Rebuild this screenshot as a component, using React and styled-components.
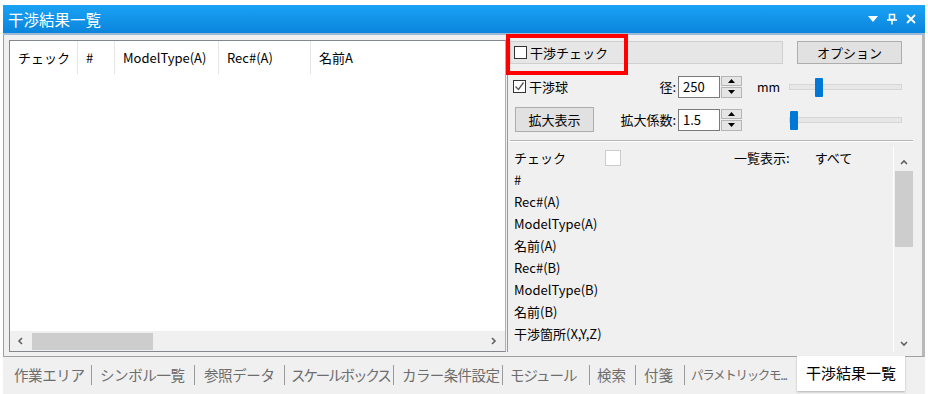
import React from 'react'
import styled, { createGlobalStyle } from 'styled-components'

const Global = createGlobalStyle`
  body {
    margin: 0;
    background: #ffffff;
    font-family: "Noto Sans CJK JP", "Noto Sans", sans-serif;
    font-size: 13px;
    color: #000;
  }
`

const Window = styled.div`
  margin: 5px 3px 0 3px;
  width: 922px;
  height: 389px;
  display: flex;
  flex-direction: column;
  background: #f0f0f0;
  box-sizing: border-box;
`

const TitleBar = styled.div`
  height: 28px;
  flex: none;
  display: flex;
  align-items: center;
  padding: 0 8px 0 5px;
  background: linear-gradient(#1aa3f5, #0a84dc);
  color: #fff;
  font-size: 15.5px;
  border-bottom: 2px solid #9db9d6;
`

const TitleText = styled.div`
  flex: 1;
`

const TitleIcons = styled.div`
  display: flex;
  align-items: center;
  gap: 7px;
`

const Body = styled.div`
  flex: 1;
  display: flex;
  padding: 5px 4px 4px 5px;
  border-left: 1px solid #a0a0a0;
  border-right: 3px solid #b8b8b8;
  border-bottom: 1px solid #a0a0a0;
  min-height: 0;
`

const ListView = styled.div`
  width: 497px;
  flex: none;
  display: flex;
  flex-direction: column;
  background: #fff;
  border: 1px solid #828790;
  border-right-color: #b0b0b0;
  box-sizing: border-box;
`

const HeaderRow = styled.div`
  height: 33px;
  display: flex;
  align-items: center;
`

const HeaderCell = styled.div`
  width: ${p => p.w}px;
  box-sizing: border-box;
  padding-left: 8px;
  height: 33px;
  line-height: 33px;
  border-right: ${p => (p.last ? 'none' : '1px solid #e5e5e5')};
  white-space: nowrap;
`

const ListBody = styled.div`
  flex: 1;
`

const HScroll = styled.div`
  height: 20px;
  display: flex;
  align-items: center;
  background: #f0f0f0;
  padding: 0 6px;
  gap: 6px;
`

const HThumb = styled.div`
  width: 121px;
  height: 17px;
  background: #cdcdcd;
`

const Spacer = styled.div`
  flex: 1;
`

const RightPanel = styled.div`
  flex: 1;
  position: relative;
  display: flex;
  flex-direction: column;
  padding-left: 2px;
  border-left: 1px solid #9a9a9a;
  margin-left: 1px;
`

const TopRow = styled.div`
  display: flex;
  align-items: center;
  height: 23px;
  margin-top: 1px;
  gap: 14px;
`

const GroupBar = styled.div`
  flex: none;
  width: 273px;
  height: 23px;
  box-sizing: border-box;
  background: #e6e6e6;
  border: 1px solid #cfcfcf;
  display: flex;
  align-items: center;
  padding-left: 3px;
  gap: 3px;
`

const Button = styled.div`
  width: ${p => p.w}px;
  height: ${p => p.h || 23}px;
  box-sizing: border-box;
  background: #e1e1e1;
  border: 1px solid #adadad;
  display: flex;
  align-items: center;
  justify-content: center;
  flex: none;
`

const Box = styled.span`
  display: inline-flex;
  align-items: center;
  justify-content: center;
  width: 13px;
  height: 13px;
  box-sizing: border-box;
  background: #fff;
  border: 1px solid #333;
  flex: none;
`

const Highlight = styled.div`
  position: absolute;
  left: -2px;
  top: -6px;
  width: 122px;
  height: 41px;
  box-sizing: border-box;
  border: 4px solid #ff0000;
  pointer-events: none;
`

const OptRow = styled.div`
  display: grid;
  grid-template-columns: 98px 70px 64px 47px 113px;
  align-items: center;
  height: ${p => p.h}px;
  margin-top: ${p => p.mt}px;
`

const CheckLabel = styled.div`
  display: flex;
  align-items: center;
  gap: 3px;
  padding-left: 3px;
`

const FieldLabel = styled.div`
  text-align: right;
  padding-right: 2px;
`

const Field = styled.div`
  display: flex;
  height: 22px;
`

const Input = styled.div`
  width: 42px;
  box-sizing: border-box;
  background: #fff;
  border: 1px solid #7a7a7a;
  padding-left: 4px;
  line-height: 20px;
`

const Spin = styled.div`
  width: 22px;
  display: flex;
  flex-direction: column;
  gap: 1px;
  padding-left: 1px;
  box-sizing: border-box;
`

const SpinBtn = styled.div`
  flex: 1;
  background: #e5e5e5;
  border: 1px solid #b5b5b5;
  display: flex;
  align-items: center;
  justify-content: center;
`

const Unit = styled.div`
  padding-left: 15px;
  font-size: 12.5px;
`

const Slider = styled.div`
  position: relative;
  height: 20px;
  display: flex;
  align-items: center;
`

const Track = styled.div`
  width: 100%;
  height: 4px;
  background: #e7e7e7;
  border: 1px solid #d6d6d6;
`

const Thumb = styled.div`
  position: absolute;
  top: 1px;
  width: 8px;
  height: 19px;
  background: #0078d7;
  border-radius: 1px;
`

const Separator = styled.div`
  height: 0;
  border-top: 1px solid #b5b5b5;
  border-bottom: 1px solid #fff;
  margin: 8px 5px 5px 0;
`

const ListArea = styled.div`
  flex: 1;
  display: flex;
  min-height: 0;
  overflow: hidden;
`

const Props = styled.div`
  flex: 1;
  padding-left: 4px;
  overflow: hidden;
`

const PropRow = styled.div`
  height: 22px;
  line-height: 22px;
  display: flex;
  align-items: center;
  white-space: nowrap;
`

const PropName = styled.div`
  width: 91px;
`

const GhostBox = styled.div`
  width: 16px;
  height: 16px;
  box-sizing: border-box;
  background: #fff;
  border: 1px solid #cccccc;
`

const ViewAll = styled.div`
  margin-left: 113px;
  display: flex;
  gap: 25px;
`

const VScroll = styled.div`
  width: 19px;
  flex: none;
  display: flex;
  flex-direction: column;
  align-items: center;
  background: #f0f0f0;
  border-left: 1px solid #fff;
  margin-right: 5px;
  padding: 11px 0 4px;
  gap: 3px;
`

const VThumb = styled.div`
  width: 18px;
  height: 76px;
  background: #cdcdcd;
`

const TabStrip = styled.div`
  height: 37px;
  flex: none;
  display: flex;
  align-items: flex-start;
  padding-left: 4px;
  background: #f0f0f0;
`

const Tab = styled.div`
  width: ${p => p.w}px;
  flex: none;
  box-sizing: border-box;
  padding-left: ${p => p.pl}px;
  color: #6d6d6d;
  font-size: ${p => p.fs || 14.5}px;
  letter-spacing: ${p => p.ls || 0}px;
  white-space: nowrap;
  overflow: hidden;
  border-right: ${p => (p.sep ? '1px solid #9a9a9a' : 'none')};
  height: 20px;
  line-height: 20px;
  margin-top: 8px;
`

const ActiveTab = styled.div`
  width: 108px;
  flex: none;
  height: 35px;
  line-height: 33px;
  margin-top: -1px;
  text-align: center;
  background: #fff;
  color: #000;
  font-size: 15px;
  white-space: nowrap;
  box-shadow: 0 1px 2px #b0b0b0;
`

const Chevron = ({ dir }) => {
  const pts = {
    left: '6,2 3,5 6,8',
    right: '3,2 6,5 3,8',
    up: '2,6 5,3 8,6',
    down: '2,4 5,7 8,4',
  }[dir]
  return (
    <svg width="10" height="10" viewBox="0 0 10 10">
      <polyline points={pts} fill="none" stroke="#606060" strokeWidth="1.6" />
    </svg>
  )
}

const Tri = ({ up }) => (
  <svg width="7" height="4" viewBox="0 0 7 4">
    <polygon points={up ? '0,4 7,4 3.5,0' : '0,0 7,0 3.5,4'} fill="#000" />
  </svg>
)

const Check = () => (
  <svg width="11" height="11" viewBox="0 0 11 11">
    <polyline points="1.5,5.5 4.5,8.5 9.5,1.5" fill="none" stroke="#555" strokeWidth="1.3" />
  </svg>
)

const columns = [
  ['チェック', 68],
  ['#', 37],
  ['ModelType(A)', 104],
  ['Rec#(A)', 92],
  ['名前A', 110],
]

const props = [
  'Rec#(A)',
  'ModelType(A)',
  '名前(A)',
  'Rec#(B)',
  'ModelType(B)',
  '名前(B)',
  '干渉箇所(X,Y,Z)',
]

// label, width, padding-left, letter-spacing, separator, font-size
const tabs = [
  ['作業エリア', 85, 7, -0.4, true],
  ['シンボル一覧', 103, 8, -0.4, true],
  ['参照データ', 90, 9, -0.4, true],
  ['スケールボックス', 109, 6, -2.1, true],
  ['カラー条件設定', 109, 8, -0.6, true],
  ['モジュール', 87, 7, -1, true],
  ['検索', 46, 7, 0, true],
  ['付箋', 49, 8, 0, true],
  ['パラメトリックモ...', 112, 6, -1.3, false, 12.5],
]

const App = () => (
  <>
    <Global />
    <Window>
      <TitleBar>
        <TitleText>干渉結果一覧</TitleText>
        <TitleIcons>
          <svg width="12" height="12" viewBox="0 0 12 12">
            <polygon points="1,3 11,3 6,9" fill="#fff" />
          </svg>
          <svg width="12" height="12" viewBox="0 0 12 12">
            <rect x="3.5" y="1.5" width="5" height="5" fill="none" stroke="#fff" strokeWidth="1.5" />
            <line x1="1" y1="7" x2="11" y2="7" stroke="#fff" strokeWidth="1.5" />
            <line x1="6" y1="7" x2="6" y2="11.5" stroke="#fff" strokeWidth="1.5" />
          </svg>
          <svg width="12" height="12" viewBox="0 0 12 12">
            <path d="M2 2 L10 10 M10 2 L2 10" stroke="#fff" strokeWidth="1.8" />
          </svg>
        </TitleIcons>
      </TitleBar>
      <Body>
        <ListView>
          <HeaderRow>
            {columns.map(([t, w], i) => (
              <HeaderCell key={t} w={w} last={i === columns.length - 1}>{t}</HeaderCell>
            ))}
          </HeaderRow>
          <ListBody />
          <HScroll>
            <Chevron dir="left" />
            <HThumb />
            <Spacer />
            <Chevron dir="right" />
          </HScroll>
        </ListView>
        <RightPanel>
          <TopRow>
            <GroupBar>
              <Box />
              <span>干渉チェック</span>
            </GroupBar>
            <Button w={105}>オプション</Button>
          </TopRow>
          <Highlight />
          <OptRow h={23} mt={11}>
            <CheckLabel>
              <Box><Check /></Box>
              <span>干渉球</span>
            </CheckLabel>
            <FieldLabel>径:</FieldLabel>
            <Field>
              <Input>250</Input>
              <Spin>
                <SpinBtn><Tri up /></SpinBtn>
                <SpinBtn><Tri /></SpinBtn>
              </Spin>
            </Field>
            <Unit>mm</Unit>
            <Slider>
              <Track />
              <Thumb style={{ left: 26 }} />
            </Slider>
          </OptRow>
          <OptRow h={25} mt={9}>
            <div style={{ paddingLeft: 5 }}>
              <Button w={79} h={25}>拡大表示</Button>
            </div>
            <FieldLabel>拡大係数:</FieldLabel>
            <Field>
              <Input>1.5</Input>
              <Spin>
                <SpinBtn><Tri up /></SpinBtn>
                <SpinBtn><Tri /></SpinBtn>
              </Spin>
            </Field>
            <div />
            <Slider>
              <Track />
              <Thumb style={{ left: 1 }} />
            </Slider>
          </OptRow>
          <Separator />
          <ListArea>
            <Props>
              <PropRow>
                <PropName>チェック</PropName>
                <GhostBox />
                <ViewAll>
                  <span>一覧表示:</span>
                  <span>すべて</span>
                </ViewAll>
              </PropRow>
              <PropRow>#</PropRow>
              {props.map(p => (
                <PropRow key={p}>{p}</PropRow>
              ))}
            </Props>
            <VScroll>
              <Chevron dir="up" />
              <VThumb />
              <Spacer />
              <Chevron dir="down" />
            </VScroll>
          </ListArea>
        </RightPanel>
      </Body>
      <TabStrip>
        {tabs.map(([t, w, pl, ls, sep, fs]) => (
          <Tab key={t} w={w} pl={pl} ls={ls} sep={sep} fs={fs}>{t}</Tab>
        ))}
        <ActiveTab>干渉結果一覧</ActiveTab>
      </TabStrip>
    </Window>
  </>
)

export default App
